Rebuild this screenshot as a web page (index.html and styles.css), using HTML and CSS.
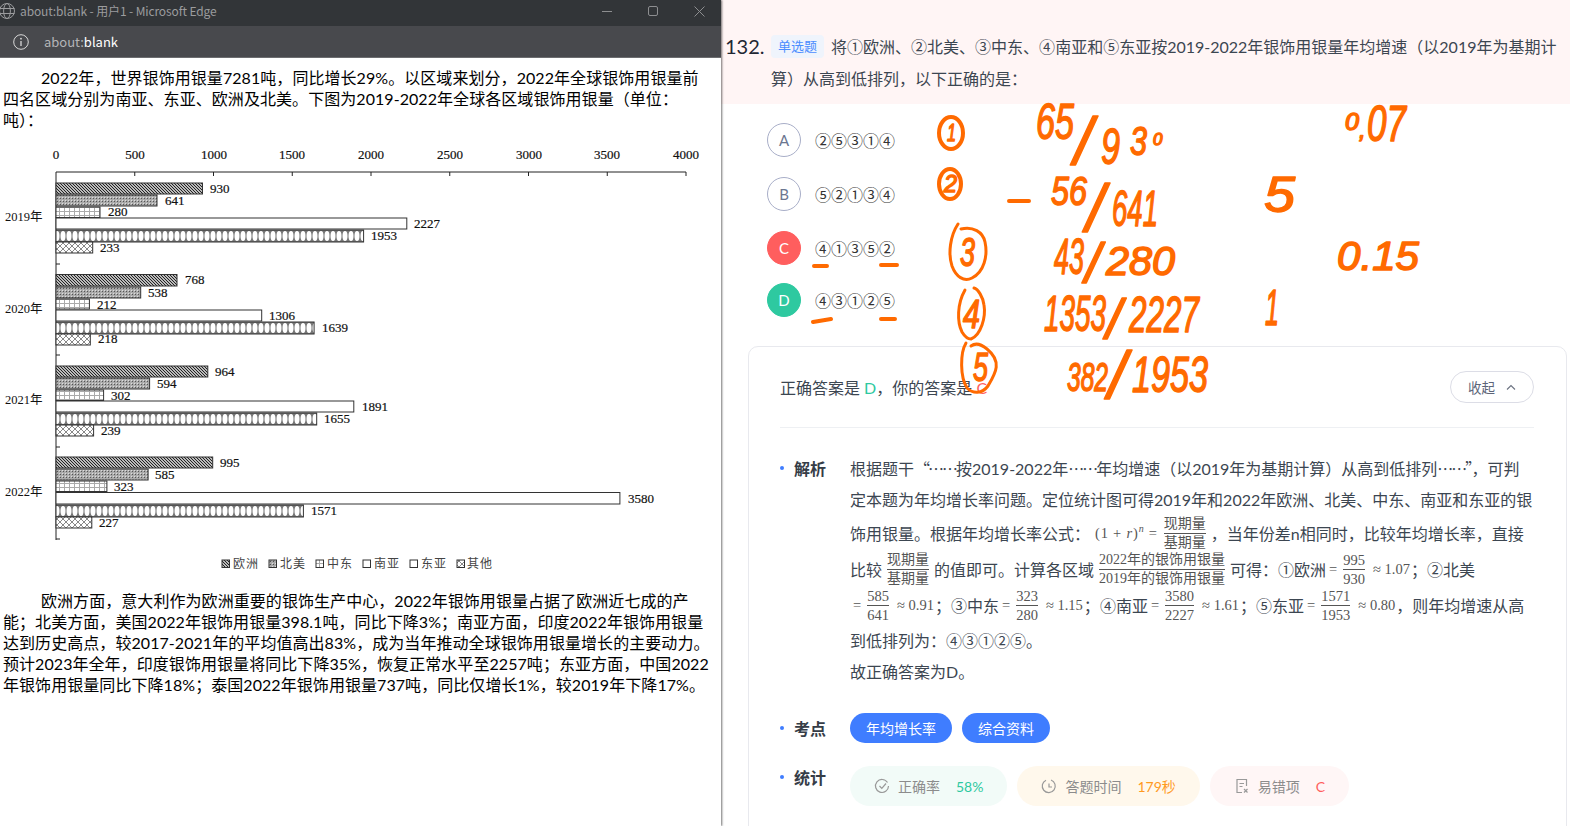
FILE: index.html
```html
<!DOCTYPE html>
<html lang="zh-CN">
<head>
<meta charset="utf-8">
<title>about:blank</title>
<link rel="stylesheet" href="styles.css">
</head>
<body>
<div class="screen">
  <section class="window">
    <header class="titlebar">
      <svg class="globe" width="16" height="16" viewBox="0 0 16 16"><g fill="none" stroke="#9b9c9e"><circle cx="7" cy="8" r="7.5"/><ellipse cx="7" cy="8" rx="3.4" ry="7.5"/><path d="M0 5.500h14.500M0 10.500h14.500"/></g></svg>
      <span class="title-text">about:blank - 用户1 - Microsoft Edge</span>
      <div class="controls">
        <svg width="10" height="10" viewBox="0 0 10 10"><path d="M0 5.500h10" stroke="#8d8e90"/></svg>
        <svg width="10" height="10" viewBox="0 0 10 10"><rect x=".5" y=".5" width="9" height="9" rx="1.500" fill="none" stroke="#8d8e90"/></svg>
        <svg width="11" height="11" viewBox="0 0 11 11"><path d="M.5.5l10 10M10.500.5l-10 10" stroke="#8d8e90"/></svg>
      </div>
    </header>
    <div class="addressbar">
      <svg width="16" height="16" viewBox="0 0 16 16"><circle cx="8" cy="8" r="7.300" fill="none" stroke="#d8d8d8"/><path d="M8 7v5" stroke="#d8d8d8" stroke-width="1.300"/><circle cx="8" cy="4.700" r=".9" fill="#d8d8d8"/></svg>
      <span class="addr"><span class="addr-dim">about:</span>blank</span>
    </div>
    <div class="doc">
      <p class="para">2022年，世界银饰用银量7281吨，同比增长29%。以区域来划分，2022年全球银饰用银量前<br>四名区域分别为南亚、东亚、欧洲及北美。下图为2019-2022年全球各区域银饰用银量（单位：<br>吨）：</p>
      <svg class="chart" width="721" height="440" viewBox="0 140 721 440">
        <defs>
          <pattern id="p-eu" width="3" height="3" patternUnits="userSpaceOnUse"><rect width="3" height="3" fill="#bbb"/><path d="M0 0l3 3M-1 2l2 2M2-1l2 2" stroke="#222" stroke-width="1"/></pattern>
          <pattern id="p-na" width="3" height="3" patternUnits="userSpaceOnUse"><rect width="3" height="3" fill="#aaa"/><rect width="1" height="1" fill="#555"/><rect x="2" y="2" width="1" height="1" fill="#ddd"/></pattern>
          <pattern id="p-me" width="5" height="4" patternUnits="userSpaceOnUse"><rect width="5" height="4" fill="#fff"/><path d="M4.500 0v4M0 3.500h5" stroke="#aaa"/></pattern>
          <pattern id="p-ea" width="6" height="12" patternUnits="userSpaceOnUse"><rect width="6" height="12" fill="#777"/><ellipse cx="3" cy="6" rx="2.500" ry="5" fill="#fff"/></pattern>
          <pattern id="p-ot" width="6" height="6" patternUnits="userSpaceOnUse"><rect width="6" height="6" fill="#fff"/><path d="M0 0l3 3-3 3M6 0l-3 3 3 3" fill="none" stroke="#888"/></pattern>
        </defs>
        <g class="axis">
          <path d="M56 172h630M56 172v368"/>
          <path d="M134.750 172v4M213.500 172v4M292.250 172v4M371 172v4M449.750 172v4M528.500 172v4M607.250 172v4M686 172v4"/>
          <path d="M56 264h4M56 355h4M56 447h4M56 539h4"/>
        </g>
        <g class="num" text-anchor="middle">
          <text x="56" y="159">0</text><text x="135" y="159">500</text><text x="214" y="159">1000</text><text x="292" y="159">1500</text><text x="371" y="159">2000</text><text x="450" y="159">2500</text><text x="529" y="159">3000</text><text x="607" y="159">3500</text><text x="686" y="159">4000</text>
        </g>
        <g class="yr">
          <text x="5" y="221">2019年</text><text x="5" y="313">2020年</text><text x="5" y="404">2021年</text><text x="5" y="496">2022年</text>
        </g>
        <g class="bars">
          <rect x="56" y="183" width="146.500" height="11" fill="url(#p-eu)"/><rect x="56" y="195" width="101" height="11" fill="url(#p-na)"/><rect x="56" y="207" width="44" height="10.500" fill="url(#p-me)"/><rect x="56" y="218" width="350.800" height="11" fill="#fff"/><rect x="56" y="0" transform="translate(0 230)" width="307.600" height="12" fill="url(#p-ea)"/><rect x="56" y="242" width="36.700" height="11" fill="url(#p-ot)"/>
          <rect x="56" y="274.500" width="121" height="11.500" fill="url(#p-eu)"/><rect x="56" y="287" width="84.700" height="11" fill="url(#p-na)"/><rect x="56" y="299" width="33.400" height="10" fill="url(#p-me)"/><rect x="56" y="310" width="205.700" height="11" fill="#fff"/><rect x="56" y="0" transform="translate(0 322)" width="258.100" height="12" fill="url(#p-ea)"/><rect x="56" y="334" width="34.300" height="11" fill="url(#p-ot)"/>
          <rect x="56" y="366" width="151.800" height="11" fill="url(#p-eu)"/><rect x="56" y="378" width="93.600" height="11" fill="url(#p-na)"/><rect x="56" y="390" width="47.600" height="10.500" fill="url(#p-me)"/><rect x="56" y="401" width="297.800" height="11" fill="#fff"/><rect x="56" y="0" transform="translate(0 413)" width="260.700" height="12" fill="url(#p-ea)"/><rect x="56" y="425" width="37.600" height="11" fill="url(#p-ot)"/>
          <rect x="56" y="457" width="156.700" height="11" fill="url(#p-eu)"/><rect x="56" y="469" width="92.100" height="11" fill="url(#p-na)"/><rect x="56" y="481" width="50.900" height="10.500" fill="url(#p-me)"/><rect x="56" y="492.500" width="563.900" height="11.500" fill="#fff"/><rect x="56" y="0" transform="translate(0 505)" width="247.400" height="12" fill="url(#p-ea)"/><rect x="56" y="517" width="35.800" height="11" fill="url(#p-ot)"/>
        </g>
        <g class="num">
          <text x="210" y="193">930</text><text x="165" y="205">641</text><text x="108" y="216">280</text><text x="414" y="228">2227</text><text x="371" y="240">1953</text><text x="100" y="252">233</text>
          <text x="185" y="284">768</text><text x="148" y="297">538</text><text x="97" y="309">212</text><text x="269" y="320">1306</text><text x="322" y="332">1639</text><text x="98" y="343">218</text>
          <text x="215" y="376">964</text><text x="157" y="388">594</text><text x="111" y="400">302</text><text x="362" y="411">1891</text><text x="324" y="423">1655</text><text x="101" y="435">239</text>
          <text x="220" y="467">995</text><text x="155" y="479">585</text><text x="114" y="491">323</text><text x="628" y="503">3580</text><text x="311" y="515">1571</text><text x="99" y="527">227</text>
        </g>
        <g class="bars">
          <rect x="222" y="560" width="7.500" height="7.500" fill="url(#p-eu)"/><rect x="269" y="560" width="7.500" height="7.500" fill="url(#p-na)"/><rect x="316" y="560" width="7.500" height="7.500" fill="url(#p-me)"/><rect x="363" y="560" width="7.500" height="7.500" fill="#fff"/><rect x="410" y="560" width="7.500" height="7.500" fill="#fff"/><rect x="457" y="560" width="7.500" height="7.500" fill="url(#p-ot)"/>
        </g>
        <g class="legend">
          <text x="233" y="568">欧洲</text><text x="280" y="568">北美</text><text x="327" y="568">中东</text><text x="374" y="568">南亚</text><text x="421" y="568">东亚</text><text x="467" y="568">其他</text>
        </g>
      </svg>
      <p class="para">欧洲方面，意大利作为欧洲重要的银饰生产中心，2022年银饰用银量占据了欧洲近七成的产<br>能；北美方面，美国2022年银饰用银量398.1吨，同比下降3%；南亚方面，印度2022年银饰用银量<br>达到历史高点，较2017-2021年的平均值高出83%，成为当年推动全球银饰用银量增长的主要动力。<br>预计2023年全年，印度银饰用银量将同比下降35%，恢复正常水平至2257吨；东亚方面，中国2022<br>年银饰用银量同比下降18%；泰国2022年银饰用银量737吨，同比仅增长1%，较2019年下降17%。</p>
    </div>
  </section>

  <main class="panel">
    <div class="question">
      <span class="qnum">132.</span>
      <div class="qbody">
        <span class="qtag">单选题</span>将<span class="cn">①</span>欧洲、<span class="cn">②</span>北美、<span class="cn">③</span>中东、<span class="cn">④</span>南亚和<span class="cn">⑤</span>东亚按2019-2022年银饰用银量年均增速（以2019年为基期计<br>算）从高到低排列，以下正确的是：
      </div>
    </div>
    <div class="options">
      <div class="option"><span class="badge">A</span><span class="cn">②⑤③①④</span></div>
      <div class="option"><span class="badge">B</span><span class="cn">⑤②①③④</span></div>
      <div class="option"><span class="badge badge-wrong">C</span><span class="cn">④①③⑤②</span></div>
      <div class="option"><span class="badge badge-right">D</span><span class="cn">④③①②⑤</span></div>
    </div>
    <section class="card">
      <div class="card-head">
        <div>正确答案是 <span class="green">D</span>，你的答案是 <span class="red">C</span></div>
        <button class="fold">收起<svg width="10" height="6" viewBox="0 0 10 6"><path d="M1 5.500l4-4 4 4" fill="none" stroke="#6b7280" stroke-width="1.100"/></svg></button>
      </div>
      <div class="row row-analysis">
        <div class="label">解析</div>
        <div class="analysis">
          <div class="line">根据题干<span class="dots">“……</span>按2019-2022年<span class="dots">……</span>年均增速（以2019年为基期计算）从高到低排列<span class="dots">……”</span>，可判</div>
          <div class="line">定本题为年均增长率问题。定位统计图可得2019年和2022年欧洲、北美、中东、南亚和东亚的银</div>
          <div class="line line-frac">饰用银量。根据年均增长率公式：<span class="math math-lead">(1 + <i>r</i>)<sup><i>n</i></sup> =</span><span class="frac frac-cn"><span>现期量</span><span>基期量</span></span>，当年份差n相同时，比较年均增长率，直接</div>
          <div class="line line-frac">比较<span class="frac frac-cn"><span>现期量</span><span>基期量</span></span>的值即可。计算各区域<span class="frac frac-cn"><span>2022年的银饰用银量</span><span>2019年的银饰用银量</span></span>可得：<span class="cn">①</span>欧洲<span class="math">=</span><span class="frac"><span>995</span><span>930</span></span><span class="math">≈ 1.07</span>；<span class="cn">②</span>北美</div>
          <div class="line line-frac"><span class="math math-first">=</span><span class="frac"><span>585</span><span>641</span></span><span class="math">≈ 0.91</span>；<span class="cn">③</span>中东<span class="math">=</span><span class="frac"><span>323</span><span>280</span></span><span class="math">≈ 1.15</span>；<span class="cn">④</span>南亚<span class="math">=</span><span class="frac"><span>3580</span><span>2227</span></span><span class="math">≈ 1.61</span>；<span class="cn">⑤</span>东亚<span class="math">=</span><span class="frac"><span>1571</span><span>1953</span></span><span class="math">≈ 0.80</span>，则年均增速从高</div>
          <div class="line line-after">到低排列为：<span class="cn">④③①②⑤</span>。</div>
          <div class="line">故正确答案为D。</div>
        </div>
      </div>
      <div class="row row-tags">
        <div class="label">考点</div>
        <div class="tags"><span class="tag">年均增长率</span><span class="tag">综合资料</span></div>
      </div>
      <div class="row row-stats">
        <div class="label">统计</div>
        <div class="stats">
          <span class="stat stat-green"><svg width="16" height="16" viewBox="0 0 16 16"><g fill="none" stroke="#999" stroke-width="1.200"><path d="M13.500 4.500A6.500 6.500 0 1 0 14.500 8"/><path d="M5.500 8l2.300 2.300 4.200-4.800"/></g></svg><span>正确率</span><b>58%</b></span>
          <span class="stat stat-orange"><svg width="16" height="16" viewBox="0 0 16 16"><g fill="none" stroke="#999" stroke-width="1.200"><path d="M10 2A6.500 6.500 0 1 1 5 2.200"/><path d="M8 5.500V9h3"/></g></svg><span>答题时间</span><b>179秒</b></span>
          <span class="stat stat-red"><svg width="16" height="16" viewBox="0 0 16 16"><g fill="none" stroke="#999" stroke-width="1.200"><path d="M8 14.500H3V1.500h9.500V8"/><path d="M5.500 5.500h4.500M5.500 8.500h3M10 11l3.500 3.500M13.500 11L10 14.500"/></g></svg><span>易错项</span><b>C</b></span>
        </div>
      </div>
    </section>
  </main>

  <svg class="ink" width="1570" height="826" viewBox="0 0 1570 826">
    <g class="ink-line">
      <ellipse class="ink-heavy" cx="951" cy="133" rx="12" ry="16"/>
      <ellipse class="ink-heavy" cx="950" cy="184" rx="11" ry="15"/>
      <path d="M958 224c-8 12-10 30-6 42 4 11 12 16 20 12 12-6 16-22 13-36-2-10-12-16-24-13"/>
      <path d="M965 290c-8 14-8 32-3 42 3 5 6 7 9 7 10-4 15-22 13-34-1-8-6-16-10-17"/>
      <path d="M966 343c-6 10-6 34 1 45 6 6 15 6 21-2 7-12 15-24-1-37-6-5-12-6-16-3"/>
      <path class="ink-heavy" d="M1009 201h20M814 266h13M881 265h16M813 322l18-3M881 319h14"/>
    </g>
    <g class="ink-text">
      <text x="947" y="141" class="i-s" textLength="9" lengthAdjust="spacingAndGlyphs">1</text>
      <text x="944" y="192" class="i-s" textLength="13" lengthAdjust="spacingAndGlyphs">2</text>
      <text x="960" y="266" class="i-m" textLength="15" lengthAdjust="spacingAndGlyphs">3</text>
      <text x="963" y="328" class="i-m" textLength="17" lengthAdjust="spacingAndGlyphs">4</text>
      <text x="973" y="381" class="i-m" textLength="15" lengthAdjust="spacingAndGlyphs">5</text>

      <text x="1036" y="139" class="i-l" textLength="38" lengthAdjust="spacingAndGlyphs">65</text>
      <text x="1074" y="164" class="i-xl">/</text>
      <text x="1101" y="164" class="i-l" textLength="19" lengthAdjust="spacingAndGlyphs">9</text>
      <text x="1130" y="155" class="i-m" textLength="17" lengthAdjust="spacingAndGlyphs">3</text>
      <text x="1153" y="145" class="i-xs">0</text>
      <text x="1345" y="130" class="i-s" textLength="14" lengthAdjust="spacingAndGlyphs">0</text>
      <text x="1359" y="138" class="i-s">,</text>
      <text x="1367" y="141" class="i-l" textLength="39" lengthAdjust="spacingAndGlyphs">07</text>

      <text x="1051" y="205" class="i-m" textLength="36" lengthAdjust="spacingAndGlyphs">56</text>
      <text x="1086" y="231" class="i-xl">/</text>
      <text x="1112" y="226" class="i-l" textLength="46" lengthAdjust="spacingAndGlyphs">641</text>
      <text x="1264" y="212" class="i-l" textLength="31" lengthAdjust="spacingAndGlyphs">5</text>

      <text x="1054" y="274" class="i-l" textLength="30" lengthAdjust="spacingAndGlyphs">43</text>
      <text x="1085" y="282" class="i-sl">/</text>
      <text x="1106" y="275" class="i-m" textLength="69" lengthAdjust="spacingAndGlyphs">280</text>
      <text x="1337" y="270" class="i-m" textLength="82" lengthAdjust="spacingAndGlyphs">0.15</text>

      <text x="1044" y="331" class="i-l" textLength="62" lengthAdjust="spacingAndGlyphs">1353</text>
      <text x="1106" y="338" class="i-sl">/</text>
      <text x="1129" y="332" class="i-l" textLength="70" lengthAdjust="spacingAndGlyphs">2227</text>
      <text x="1265" y="325" class="i-l" textLength="14" lengthAdjust="spacingAndGlyphs">1</text>

      <text x="1067" y="391" class="i-m" textLength="41" lengthAdjust="spacingAndGlyphs">382</text>
      <text x="1108" y="398" class="i-xl">/</text>
      <text x="1132" y="392" class="i-l" textLength="76" lengthAdjust="spacingAndGlyphs">1953</text>
    </g>
  </svg>
</div>
</body>
</html>
```

FILE: styles.css
```css
* { box-sizing: border-box; }
html, body { margin: 0; padding: 0; height: 100%; overflow: hidden; background: #fff; }
body { font-family: Lato, "Noto Sans CJK SC", sans-serif; }
.cn { font-family: "Noto Sans CJK SC", sans-serif; }

.screen { position: relative; display: flex; width: 1570px; height: 826px; overflow: hidden; }

/* pop-up browser window */
.window { flex: 0 0 721px; display: flex; flex-direction: column; height: 826px; background: #fff; box-shadow: 1px 0 2px rgba(0,0,0,.55); z-index: 1; }
.titlebar { flex: 0 0 26px; display: flex; align-items: center; padding-bottom: 4px; background: #323538; color: #9b9c9e; font-family: "Noto Sans CJK SC", sans-serif; font-size: 12px; line-height: 16px; overflow: hidden; }
.globe { flex: none; }
.title-text { margin-left: 4px; letter-spacing: -.12px; white-space: nowrap; }
.controls { margin-left: auto; display: flex; align-items: center; gap: 36px; padding-right: 16px; }
.addressbar { flex: 0 0 32px; display: flex; align-items: center; gap: 15px; padding-left: 13px; background: #48494d; border-bottom: 1px solid #6c6d70; }
.addr { color: #fff; font-family: "Noto Sans CJK SC", sans-serif; font-size: 13px; }
.addr-dim { color: #b4b5b7; }

.doc { flex: 1; padding: 9px 0 0 3px; color: #000; overflow: hidden; }
.para { margin: 0; font-size: 16px; line-height: 21px; letter-spacing: .06px; text-indent: 38px; white-space: nowrap; }
.chart { display: block; margin: 10px 0 10px -3px; }
.axis path { fill: none; stroke: #222; stroke-width: 1; }
.bars rect { stroke: #333; stroke-width: 1; }
.num text { font-family: "Liberation Serif", serif; font-size: 13px; fill: #111; stroke: #111; stroke-width: .2px; }
.yr text { font-family: "Liberation Serif", "Noto Sans CJK SC", serif; font-size: 12.500px; fill: #111; }
.legend text { font-family: "Noto Sans CJK SC", sans-serif; font-size: 12px; letter-spacing: 1px; fill: #444; }

/* question panel */
.panel { flex: 1; min-width: 0; color: #3c4651; font-size: 16px; }
.question { display: flex; height: 104px; padding: 30px 8px 0 4px; background: #fff5f5; }
.qnum { flex: 0 0 46px; font-size: 20px; line-height: 32px; color: #1f2733; }
.qbody { flex: 1; line-height: 32px; white-space: nowrap; }
.qtag { display: inline-block; width: 53px; height: 23px; margin-right: 7px; background: #eff4fc; border-radius: 4px; color: #4c8dff; font-size: 13px; line-height: 23px; text-align: center; vertical-align: 2px; }

.options { display: flex; flex-direction: column; gap: 20px; padding: 19px 0 0 45px; height: 242px; }
.option { display: flex; align-items: center; gap: 14px; height: 34px; font-size: 16px; color: #333; margin-left: 1px; }
.option:last-child { margin-top: -2px; }
.badge { flex: none; display: flex; align-items: center; justify-content: center; width: 34px; height: 34px; border: 1px solid #a8aec8; border-radius: 50%; color: #6b7690; font-size: 15px; }
.badge-wrong { background: #ff5e5e; border-color: #ff5e5e; color: #fff; }
.badge-right { background: #2ec9a0; border-color: #2ec9a0; color: #fff; }

.card { width: 819px; margin-left: 27px; height: 500px; padding: 0 32px 0 31px; background: #fff; border: 1px solid #e8e9ee; border-radius: 10px; }
.card-head { display: flex; align-items: center; justify-content: space-between; height: 81px; border-bottom: 1px solid #eef0f3; font-size: 16px; }
.green { color: #2ec9a0; }
.red { color: #ff5e5e; }
.fold { display: flex; align-items: center; justify-content: center; gap: 11px; width: 84px; height: 32px; padding: 0; background: #fff; border: 1px solid #dcdde6; border-radius: 16px; color: #5d6579; font: inherit; font-size: 13.500px; }

.row { display: flex; }
.label { position: relative; flex: 0 0 70px; padding-left: 14px; font-weight: 700; font-size: 16px; line-height: 31px; color: #363d47; font-family: "Noto Sans CJK SC", sans-serif; }
.label::before { content: ""; position: absolute; left: 0; top: 13px; width: 4px; height: 4px; border-radius: 50%; background: #3f7dff; }
.row-analysis { padding-top: 25px; }
.line { height: 31px; line-height: 31px; white-space: nowrap; font-size: 16px; }
.dots { font-family: "Noto Sans CJK SC", sans-serif; letter-spacing: -2px; }
.line-frac { display: flex; align-items: center; height: 36px; }
.line-after { margin-top: 2px; }
.math { margin: 0 1px 0 3px; font-family: "Liberation Serif", serif; font-size: 14.500px; color: #555; white-space: pre; }
.math sup { font-size: 10px; line-height: 0; }
.math-lead { margin-left: 5px; letter-spacing: .8px; }
.math-first { margin-left: 3px; }
.frac { display: inline-flex; flex-direction: column; align-items: stretch; margin: 0 5px; font-family: "Liberation Serif", "Noto Sans CJK SC", serif; font-size: 14.500px; line-height: 18px; text-align: center; color: #555; }
.frac-cn { font-size: 14px; }
.frac span:first-child { border-bottom: 1px solid #555; }
.row-tags { padding-top: 26px; align-items: center; }
.row-tags .label { line-height: 30px; }
.tags { display: flex; gap: 10px; }
.tag { height: 30px; padding: 0 16px; background: #3f7dff; border-radius: 15px; color: #fff; font-family: "Noto Sans CJK SC", sans-serif; font-size: 14px; line-height: 30px; }
.row-stats { padding-top: 23px; }
.row-stats .label { line-height: 22px; }
.row-stats .label::before { top: 9px; }
.stats { display: flex; gap: 10px; }
.stat { display: flex; align-items: center; height: 40px; padding: 0 24px; border-radius: 20px; color: #8c8c8c; font-size: 14px; }
.stat svg { margin-right: 8px; }
.stat b { margin-left: 16px; font-weight: 400; }
.stat-green { background: #f2fbf8; }
.stat-green b { color: #2ec9a0; }
.stat-orange { background: #fff8ec; }
.stat-orange b { color: #ff9a1f; }
.stat-red { background: #fff6f6; }
.stat-red b { color: #ff5e5e; }

/* pen annotations drawn over the screen */
.ink { position: absolute; left: 0; top: 0; z-index: 2; pointer-events: none; }
.ink-line { fill: none; stroke: #ff6a00; stroke-width: 3; stroke-linecap: round; }
.ink-heavy { stroke-width: 4; }
.ink-text { font-family: "Liberation Sans", sans-serif; font-style: italic; fill: #ff6a00; stroke: #ff6a00; stroke-width: 1.500px; stroke-linejoin: round; }
.i-xs { font-size: 17px; }
.i-s { font-size: 24px; }
.i-m { font-size: 40px; }
.i-l { font-size: 50px; }
.i-sl { font-size: 56px; }
.i-xl { font-size: 66px; }
```
